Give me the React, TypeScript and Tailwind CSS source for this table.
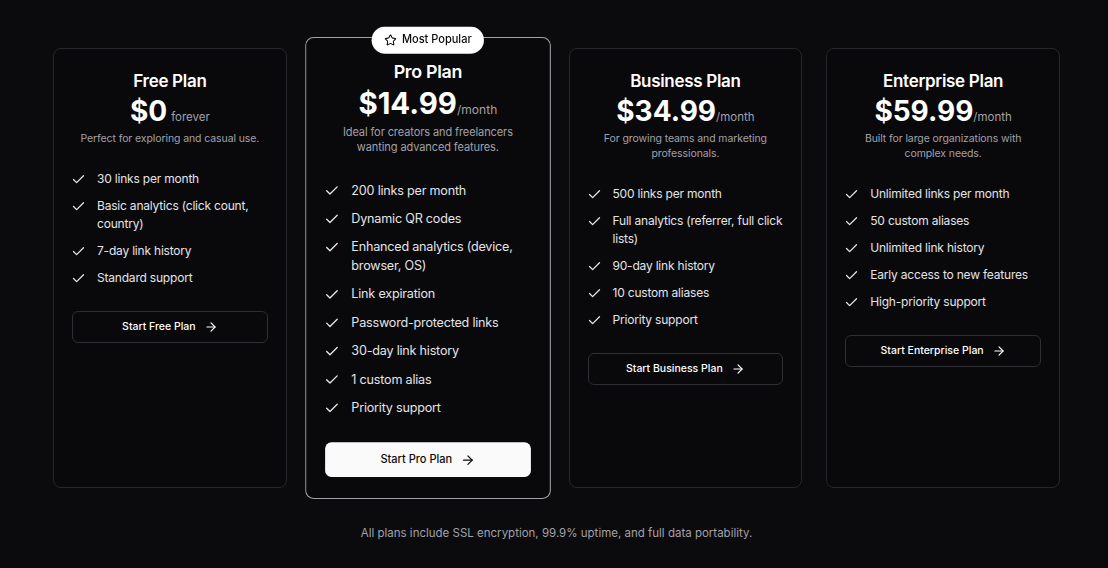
import { Check, ArrowRight, Star } from 'lucide-react'

type Plan = {
  name: string
  price: string
  period: string
  description: string[]
  features: string[][]
  cta: string
  popular?: boolean
}

const PLANS: Plan[] = [
  {
    name: 'Free Plan',
    price: '$0',
    period: 'forever',
    description: ['Perfect for exploring and casual use.'],
    features: [
      ['30 links per month'],
      ['Basic analytics (click count,', 'country)'],
      ['7-day link history'],
      ['Standard support'],
    ],
    cta: 'Start Free Plan',
  },
  {
    name: 'Pro Plan',
    price: '$14.99',
    period: '/month',
    description: ['Ideal for creators and freelancers', 'wanting advanced features.'],
    features: [
      ['200 links per month'],
      ['Dynamic QR codes'],
      ['Enhanced analytics (device,', 'browser, OS)'],
      ['Link expiration'],
      ['Password-protected links'],
      ['30-day link history'],
      ['1 custom alias'],
      ['Priority support'],
    ],
    cta: 'Start Pro Plan',
    popular: true,
  },
  {
    name: 'Business Plan',
    price: '$34.99',
    period: '/month',
    description: ['For growing teams and marketing', 'professionals.'],
    features: [
      ['500 links per month'],
      ['Full analytics (referrer, full click', 'lists)'],
      ['90-day link history'],
      ['10 custom aliases'],
      ['Priority support'],
    ],
    cta: 'Start Business Plan',
  },
  {
    name: 'Enterprise Plan',
    price: '$59.99',
    period: '/month',
    description: ['Built for large organizations with', 'complex needs.'],
    features: [
      ['Unlimited links per month'],
      ['50 custom aliases'],
      ['Unlimited link history'],
      ['Early access to new features'],
      ['High-priority support'],
    ],
    cta: 'Start Enterprise Plan',
  },
]

function PlanCard({ plan }: { plan: Plan }) {
  return (
    <div
      className={`relative rounded-lg border px-[18px] py-5 bg-[#09090b] ${
        plan.popular ? 'border-[#a1a1a6] scale-105 z-10' : 'border-[#27272b]'
      }`}
    >
      {plan.popular && (
        <div className="absolute left-1/2 top-0 -translate-x-1/2 -translate-y-[11px] flex items-center gap-[5px] h-[26px] px-3 rounded-full bg-white text-[#0a0a0a] text-[10.5px] font-medium whitespace-nowrap">
          <Star size={12} strokeWidth={2} />
          Most Popular
        </div>
      )}

      <h3 className="text-center text-[17px] leading-6 font-semibold tracking-[-0.3px] text-white">{plan.name}</h3>
      <div className="flex items-baseline justify-center h-9 leading-9">
        <span className="text-[28px] font-bold text-white">{plan.price}</span>
        <span className={`text-[11.5px] text-[#a1a1aa] ${plan.period === 'forever' ? 'ml-1' : ''}`}>{plan.period}</span>
      </div>
      <p className="mt-0.5 text-center text-[10.5px] leading-[15px] tracking-[-0.1px] text-[#a1a1aa]">
        {plan.description.map((line) => (
          <span key={line} className="block">{line}</span>
        ))}
      </p>

      <ul className="mt-6 flex flex-col gap-[9px]">
        {plan.features.map((f) => (
          <li key={f[0]} className="flex items-start gap-[11px] text-[12px] leading-[18px] tracking-[-0.2px] text-[#e4e4e7]">
            <Check size={15} strokeWidth={2.1} className="shrink-0 -ml-[1px] mt-[2px] text-[#e4e4e7]" />
            <span className="whitespace-nowrap">
              {f.map((line) => (
                <span key={line} className="block">{line}</span>
              ))}
            </span>
          </li>
        ))}
      </ul>

      <button
        className={`mt-6 w-full rounded-md flex items-center justify-center gap-2 text-[10.5px] font-medium ${
          plan.popular
            ? 'h-[33px] bg-[#fafafa] text-[#0a0a0a]'
            : 'h-8 border border-[#2e2e33] text-white'
        }`}
      >
        {plan.cta}
        <ArrowRight size={14} strokeWidth={2} />
      </button>
    </div>
  )
}

export default function App() {
  return (
    <div className="min-h-[568px] bg-[#0b0b0d] pt-12 pl-[53px] font-['Inter',sans-serif]">
      <div className="w-[1007px] grid grid-cols-4 gap-6">
        {PLANS.map((p) => (
          <PlanCard key={p.name} plan={p} />
        ))}
      </div>
      <p className="mt-[35px] w-[1007px] text-center text-[11.5px] leading-5 text-[#a1a1aa]">
        All plans include SSL encryption, 99.9% uptime, and full data portability.
      </p>
    </div>
  )
}
